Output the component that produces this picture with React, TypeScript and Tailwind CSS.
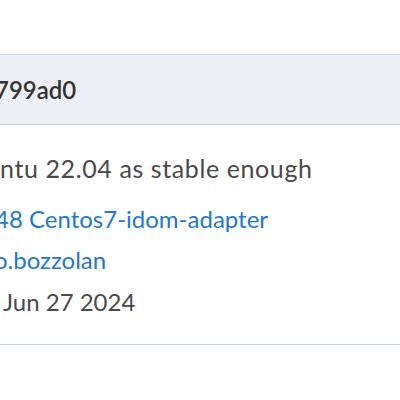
export default function App() {
  return (
    <div className="w-[400px] h-[400px] overflow-hidden bg-white font-['Lato','Noto_Sans',sans-serif]">
      <div className="h-[54px]" />
      {/* card */}
      <div className="border-y border-[#c8d6e4]">
        <div className="h-[70px] flex items-center bg-[#eceff4] border-b border-[#c8d6e4]">
          <span className="ml-[-5px] text-[24px] font-semibold text-[#333333] whitespace-nowrap">
            799ad0
          </span>
        </div>
        <div className="pt-[29px] pb-[28px] text-[24px] leading-[28px] text-[#4a4a4a] whitespace-nowrap">
          <div className="text-[25px] tracking-[0.6px]">ntu 22.04 as stable enough</div>
          <div className="mt-[23px] ml-[-5px]">
            <a className="text-[#1f78d1]">48 Centos7-idom-adapter</a>
          </div>
          <div className="mt-[13px] ml-[-6px]">
            <a className="text-[#1f78d1]">o.bozzolan</a>
          </div>
          <div className="mt-[14px] pl-[3px]">Jun 27 2024</div>
        </div>
      </div>
    </div>
  );
}
